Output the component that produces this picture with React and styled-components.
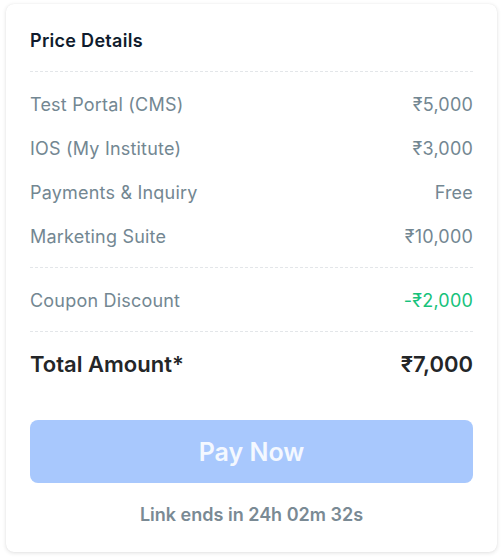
import styled, { createGlobalStyle } from "styled-components";

const GlobalStyle = createGlobalStyle`
  body {
    margin: 0;
    background: #ffffff;
    font-family: Inter, "Noto Sans", sans-serif;
  }
`;

const items = [
  { label: "Test Portal (CMS)", value: "₹5,000" },
  { label: "IOS (My Institute)", value: "₹3,000" },
  { label: "Payments & Inquiry", value: "Free" },
  { label: "Marketing Suite", value: "₹10,000" },
];

const App = () => {
  return (
    <>
      <GlobalStyle />
      <Page>
        <Card>
          <Title>Price Details</Title>
          <Divider />
          <Group>
            {items.map((item) => (
              <Row key={item.label}>
                <Label>{item.label}</Label>
                <Value>{item.value}</Value>
              </Row>
            ))}
          </Group>
          <Divider />
          <Row>
            <Label>Coupon Discount</Label>
            <Value discount>-₹2,000</Value>
          </Row>
          <Divider />
          <TotalRow>
            <span>Total Amount*</span>
            <span>₹7,000</span>
          </TotalRow>
          <PayButton>Pay Now</PayButton>
          <Expiry>Link ends in 24h 02m 32s</Expiry>
        </Card>
      </Page>
    </>
  );
};

export default App;

const Page = styled.div`
  padding: 4px 6px 8px 6px;
`;

const Card = styled.div`
  background: #ffffff;
  border-radius: 8px;
  box-shadow: 0 1px 4px rgba(0, 0, 0, 0.12), 0 0 1px rgba(0, 0, 0, 0.08);
  padding: 27px 24px 27px 24px;
  display: flex;
  flex-direction: column;
`;

const Title = styled.div`
  font-size: 18px;
  font-weight: 600;
  color: #0f1b2d;
  line-height: 20px;
  letter-spacing: 0.3px;
  margin-bottom: 20px;
`;

const Divider = styled.div`
  border-top: 1px dashed #e3e6e9;
`;

const Group = styled.div`
  display: flex;
  flex-direction: column;
  padding: 10px 0 9px 0;
`;

const Row = styled.div`
  display: flex;
  justify-content: space-between;
  align-items: center;
  height: 44px;
  font-size: 18px;
  letter-spacing: 0.2px;
  ${Divider} + & {
    margin: 10px 0 9px 0;
  }
`;

const Label = styled.span`
  color: #738792;
`;

const Value = styled.span`
  color: ${({ discount }) => (discount ? "#17c27b" : "#738792")};
`;

const TotalRow = styled.div`
  display: flex;
  justify-content: space-between;
  align-items: center;
  height: 64px;
  font-size: 22px;
  font-weight: 600;
  color: #242628;
`;

const PayButton = styled.button`
  margin-top: 24px;
  height: 63px;
  border: none;
  border-radius: 8px;
  background: #a8c8fd;
  color: #f4f8ff;
  font-family: Inter, "Noto Sans", sans-serif;
  font-size: 25px;
  font-weight: 600;
  cursor: pointer;
`;

const Expiry = styled.div`
  margin-top: 21px;
  text-align: center;
  font-size: 18px;
  font-weight: 600;
  color: #7a8a94;
`;
